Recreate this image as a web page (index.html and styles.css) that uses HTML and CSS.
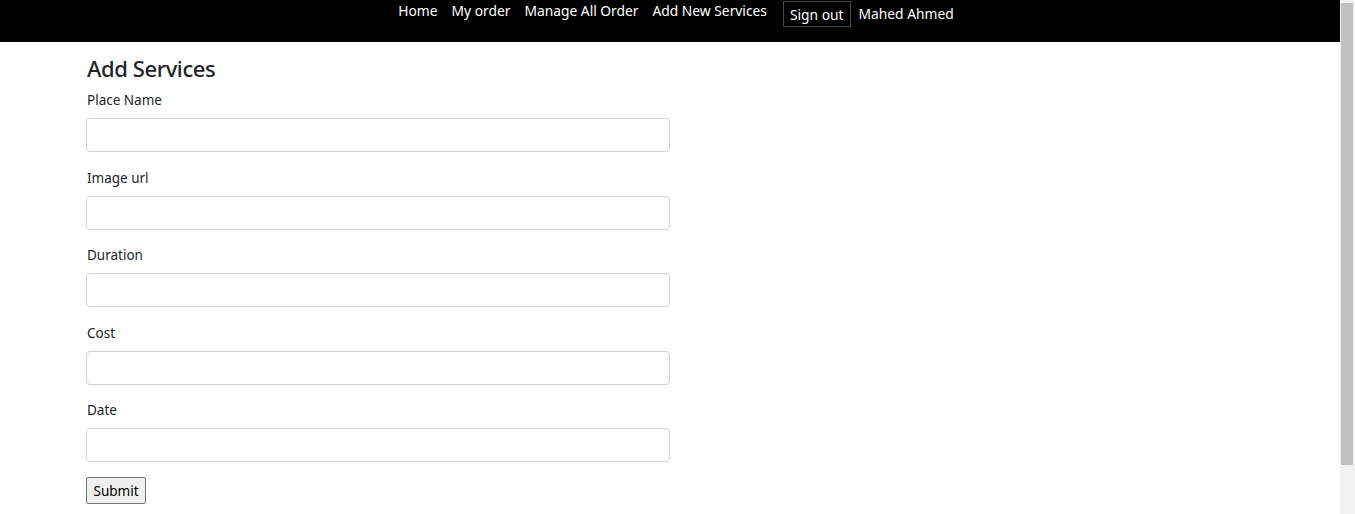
FILE: index.html
```html
<!DOCTYPE html>
<html lang="en">
<head>
<meta charset="utf-8">
<title>Add Services</title>
<link rel="stylesheet" href="styles.css">
</head>
<body>
<header class="topbar">
  <nav class="nav">
    <a class="nav-link" href="#">Home</a>
    <a class="nav-link" href="#">My order</a>
    <a class="nav-link" href="#">Manage All Order</a>
    <a class="nav-link" href="#">Add New Services</a>
    <button class="signout" type="button">Sign out</button>
    <span class="user">Mahed Ahmed</span>
  </nav>
</header>
<main class="container">
  <h3 class="title">Add Services</h3>
  <form class="form">
    <div class="field">
      <label class="label">Place Name</label>
      <input class="input" type="text">
    </div>
    <div class="field">
      <label class="label">Image url</label>
      <input class="input" type="text">
    </div>
    <div class="field">
      <label class="label">Duration</label>
      <input class="input" type="text">
    </div>
    <div class="field">
      <label class="label">Cost</label>
      <input class="input" type="text">
    </div>
    <div class="field">
      <label class="label">Date</label>
      <input class="input" type="text">
    </div>
    <button class="submit" type="submit">Submit</button>
  </form>
</main>
<div class="scrollbar" aria-hidden="true"><div class="scroll-thumb"></div></div>
</body>
</html>
```

FILE: styles.css
```css
html, body {
  margin: 0;
  padding: 0;
}
body {
  font-family: "Noto Sans", "Open Sans", sans-serif;
  color: #212529;
  background: #fff;
  min-height: 572px;
  margin-right: 15px;
}
.scrollbar {
  position: fixed;
  top: 0;
  right: 0;
  width: 15px;
  height: 100vh;
  background: #f1f1f1;
  box-sizing: border-box;
  padding: 3px 2px 0 1px;
}
.scroll-thumb {
  height: 462px;
  background: #c1c1c1;
}
.topbar {
  background: #000;
  height: 42px;
}
.nav {
  display: flex;
  justify-content: center;
  align-items: flex-start;
  padding-left: 12px;
  font-size: 13.8px;
}
.nav-link {
  color: #fff;
  text-decoration: none;
  padding: 1px 7px 0;
  line-height: 20px;
}
.signout {
  margin: 1px 1px 0 9px;
  height: 26px;
  padding: 0 6px;
  background: #000;
  color: #fff;
  border: 1px solid #4a4a4a;
  border-radius: 0;
  font-family: inherit;
  font-size: 13.8px;
}
.user {
  color: #fff;
  padding: 0 7px;
  margin-top: 4px;
  line-height: 20px;
}
.container {
  padding: 0 0 0 87px;
}
.title {
  margin: 11px 0 0;
  font-size: 22px;
  font-weight: 500;
  letter-spacing: -0.4px;
  line-height: 30px;
}
.form {
  width: 584px;
  margin-left: -1px;
}
.field {
  display: flex;
  flex-direction: column;
}
.label {
  font-size: 13.5px;
  line-height: 20px;
  margin: 7px 0 8px 1px;
}
.field + .field .label {
  margin-top: 15.5px;
}
.input {
  height: 34px;
  box-sizing: border-box;
  border: 1px solid #ced4da;
  border-radius: 4px;
  padding: 0 11px;
  font-size: 14px;
}
.submit {
  margin-top: 15px;
  height: 27px;
  width: 60px;
  padding: 0;
  font-family: inherit;
  font-size: 13.5px;
  color: #000;
  background: #efefef;
  border: 1px solid #767676;
  border-radius: 2px;
}
```
